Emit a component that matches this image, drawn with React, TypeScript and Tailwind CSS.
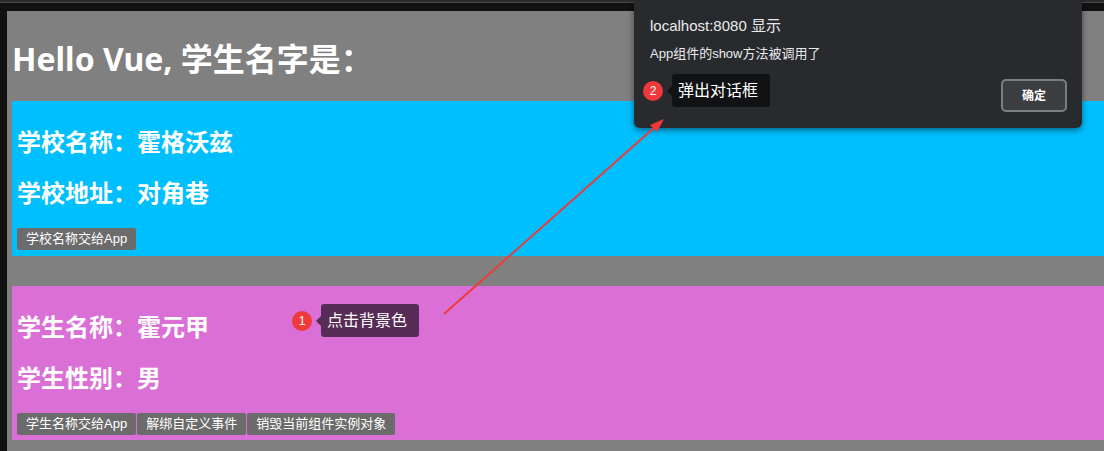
import React from "react";

const cjk = { fontFamily: '"Noto Sans", "Noto Sans CJK SC", sans-serif' };
const ui = { fontFamily: '"Liberation Sans", "Noto Sans CJK SC", sans-serif' };

function Btn({ children }: { children: React.ReactNode }) {
  return (
    <button
      className="h-[22px] px-[9px] bg-[#6b6b6b] text-white text-[13px] leading-[22px] rounded-[2px] whitespace-nowrap"
      style={ui}
    >
      {children}
    </button>
  );
}

function Line({ children }: { children: React.ReactNode }) {
  return (
    <h2 className="text-[24px] leading-[31px] font-bold text-white whitespace-nowrap">
      {children}
    </h2>
  );
}

function Note({ n, text, bg, tri }: { n: string; text: string; bg: string; tri: string }) {
  return (
    <div className="flex items-center">
      <div
        className="w-[20px] h-[20px] rounded-full bg-[#f0393b] text-white text-[12px] leading-[20px] text-center"
        style={ui}
      >
        {n}
      </div>
      <div className={`ml-[4px] w-0 h-0 border-y-[5px] border-y-transparent border-r-[5px] ${tri}`} />
      <div
        className={`w-[98px] h-[33px] rounded-[3px] text-white text-[16px] leading-[33px] pl-[6px] whitespace-nowrap ${bg}`}
        style={cjk}
      >
        {text}
      </div>
    </div>
  );
}

export default function App() {
  return (
    <div className="relative w-[1104px] h-[451px] overflow-hidden bg-[#111111]" style={cjk}>
      <div className="h-[2px] bg-[#2c2c2c]" />
      <div className="h-px bg-[#4a4a4a]" />
      <div className="pt-[8px] pl-[7px]">
        <div className="bg-[#808080] p-[5px] pr-0 h-[460px] flex flex-col">
          <h1 className="py-[21px] text-[32px] leading-[43px] font-bold text-white whitespace-nowrap">
            Hello Vue, 学生名字是：
          </h1>
          <div className="bg-[#00bfff] p-[5px] pt-[25px] pb-[6px] flex flex-col gap-[20px]">
            <Line>学校名称：霍格沃兹</Line>
            <Line>学校地址：对角巷</Line>
            <div className="flex">
              <Btn>学校名称交给App</Btn>
            </div>
          </div>
          <div className="mt-[30px] bg-[#da70d6] p-[5px] pt-[25px] flex flex-col gap-[20px]">
            <Line>学生名称：霍元甲</Line>
            <Line>学生性别：男</Line>
            <div className="flex gap-[1px]">
              <Btn>学生名称交给App</Btn>
              <Btn>解绑自定义事件</Btn>
              <Btn>销毁当前组件实例对象</Btn>
            </div>
          </div>
        </div>
      </div>

      {/* alert dialog */}
      <div
        className="absolute left-[634px] top-0 w-[448px] h-[128px] bg-[#292a2d] rounded-b-[6px] shadow-[0_2px_6px_rgba(0,0,0,0.5)] text-[#e8eaed] flex flex-col px-[16px] pt-[16px]"
        style={ui}
      >
        <div className="text-[15px] leading-[20px] whitespace-nowrap">localhost:8080 显示</div>
        <div className="mt-[9px] text-[13px] leading-[18px] whitespace-nowrap">App组件的show方法被调用了</div>
        <div className="mt-[16px] flex justify-end">
          <button className="mr-[-1px] w-[66px] h-[33px] border-2 border-[#7b7e82] bg-[#3b3d40] rounded-[5px] text-white text-[12px] font-semibold">
            确定
          </button>
        </div>
      </div>

      {/* annotations */}
      <div className="absolute left-[643px] top-[74px]">
        <Note n="2" text="弹出对话框" bg="bg-[#111214]" tri="border-r-[#111214]" />
      </div>
      <div className="absolute left-[292px] top-[304px]">
        <Note n="1" text="点击背景色" bg="bg-[#572c56]" tri="border-r-[#572c56]" />
      </div>

      {/* arrow */}
      <svg className="absolute left-0 top-0 pointer-events-none" width="1104" height="451">
        <line x1="444" y1="314" x2="656" y2="126" stroke="#f03a3a" strokeWidth="2" />
        <polygon points="664,119 650,125 657,132" fill="#f03a3a" />
      </svg>
    </div>
  );
}
